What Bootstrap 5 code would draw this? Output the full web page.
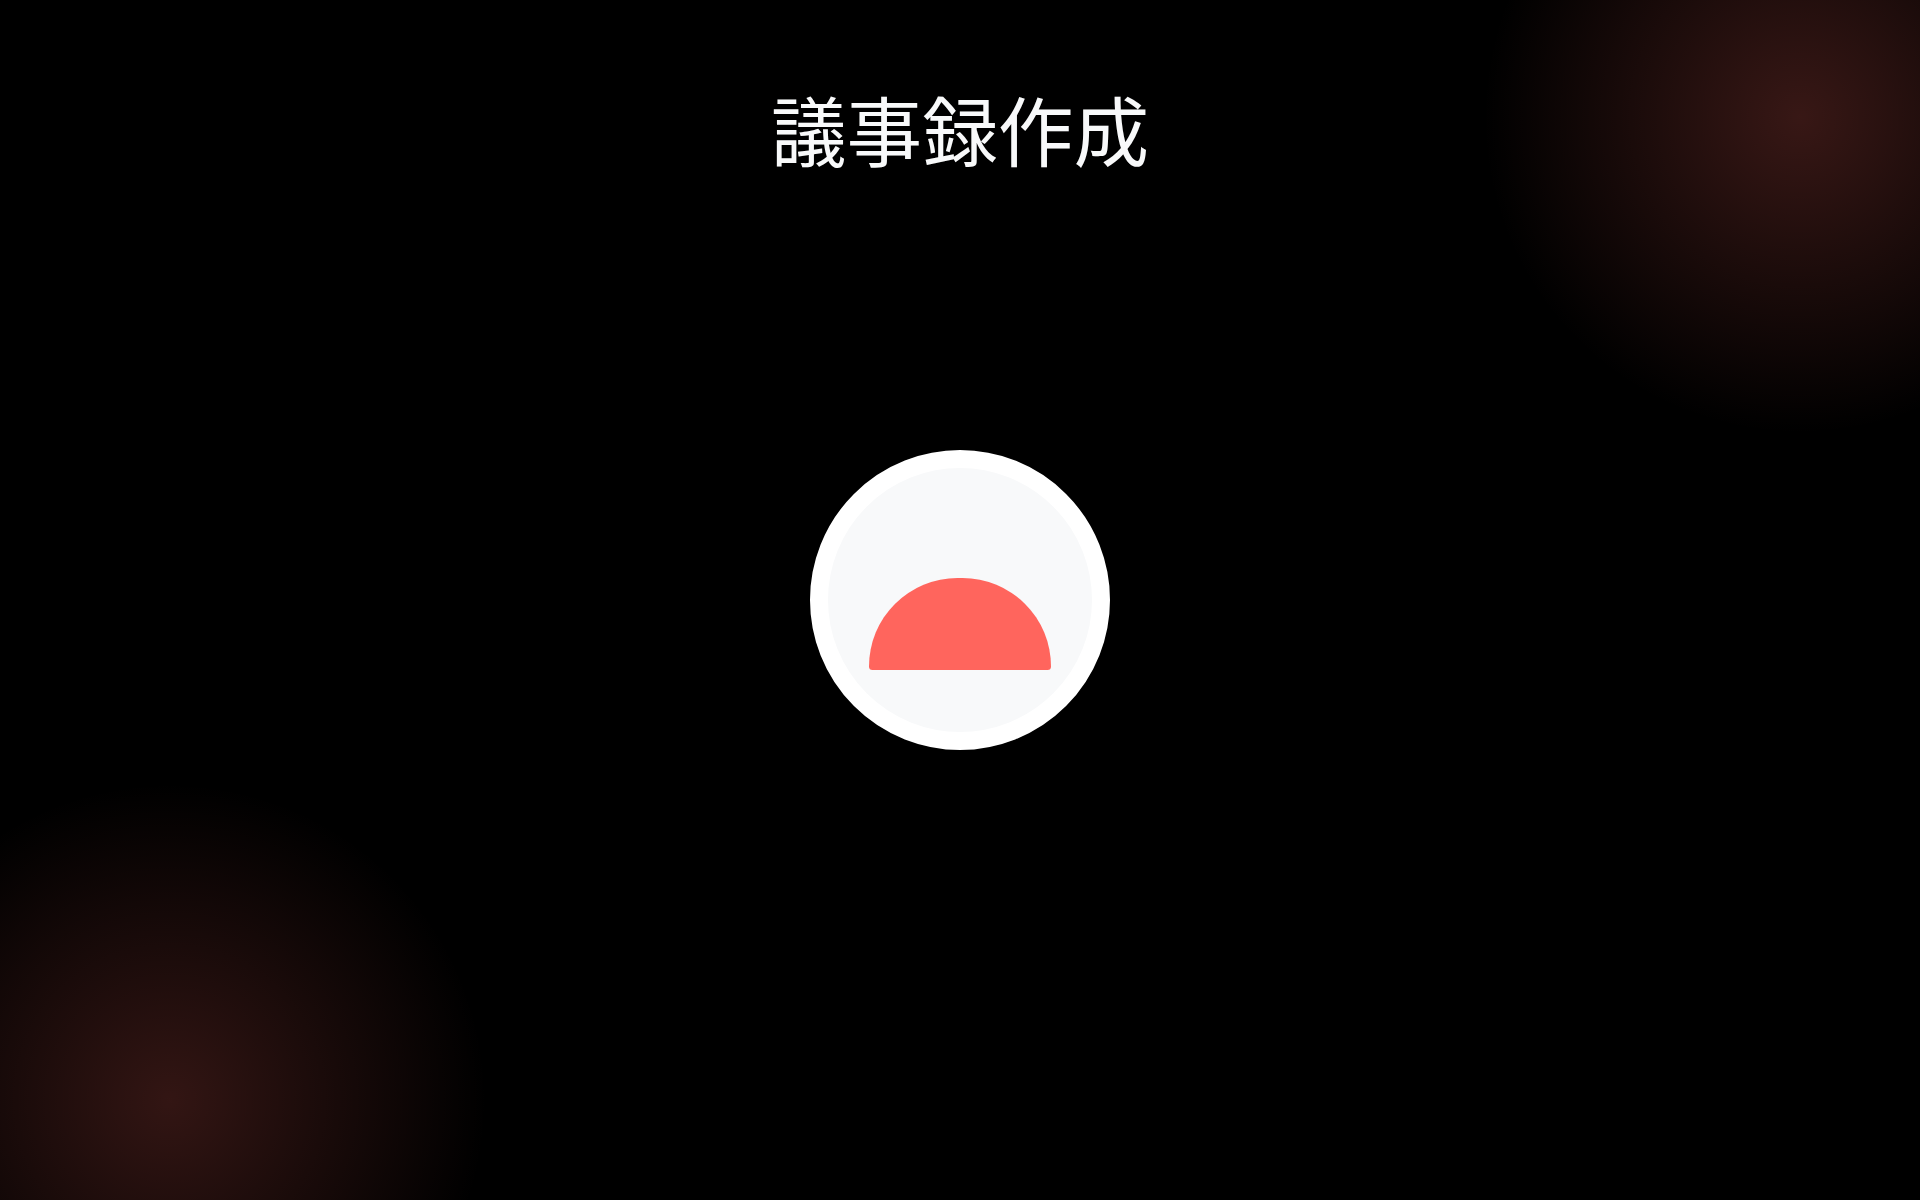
<!DOCTYPE html>
<html lang="ja">
<head>
<meta charset="utf-8">
<title>議事録作成</title>
<link href="https://cdn.jsdelivr.net/npm/bootstrap@5.3.0/dist/css/bootstrap.min.css" rel="stylesheet">
<style>
html, body { height: 100%; }
body { background: #000; overflow: hidden; }
.stage { height: 100vh; display: grid; grid-template-rows: 1fr auto 1fr; position: relative; overflow: hidden; }
.glow { position: absolute; width: 640px; height: 640px; background: radial-gradient(circle, rgba(255,107,97,.22) 0%, rgba(255,107,97,0) 70%); pointer-events: none; }
.glow-tr { top: -203px; right: -200px; }
.glow-bl { bottom: -220px; left: -150px; background: radial-gradient(circle, rgba(255,107,97,.2) 0%, rgba(255,107,97,0) 70%); }
.page-title { font-family: "Noto Sans CJK JP", "Liberation Sans", sans-serif; font-size: 75.6px; font-weight: 400; line-height: 1; color: #f8f9fa; padding-top: 91px; margin: 0; position: relative; text-align: center; }
.rec-btn { width: 300px; height: 300px; border: 18px solid #fff; background: #f8f9fa; padding: 0 0 62px; position: relative; }
.rec-shape { display: block; width: 182px; height: 92px; background: #ff655d; border-radius: 100px 100px 4px 4px; }
</style>
</head>
<body>
<main class="stage">
  <div class="glow glow-tr"></div>
  <div class="glow glow-bl"></div>
  <h1 class="page-title">議事録作成</h1>
  <div class="d-flex justify-content-center">
    <button type="button" class="rec-btn rounded-circle d-flex align-items-end justify-content-center" aria-label="録音">
      <span class="rec-shape"></span>
    </button>
  </div>
  <div></div>
</main>
<script src="https://cdn.jsdelivr.net/npm/bootstrap@5.3.0/dist/js/bootstrap.bundle.min.js"></script>
</body>
</html>
